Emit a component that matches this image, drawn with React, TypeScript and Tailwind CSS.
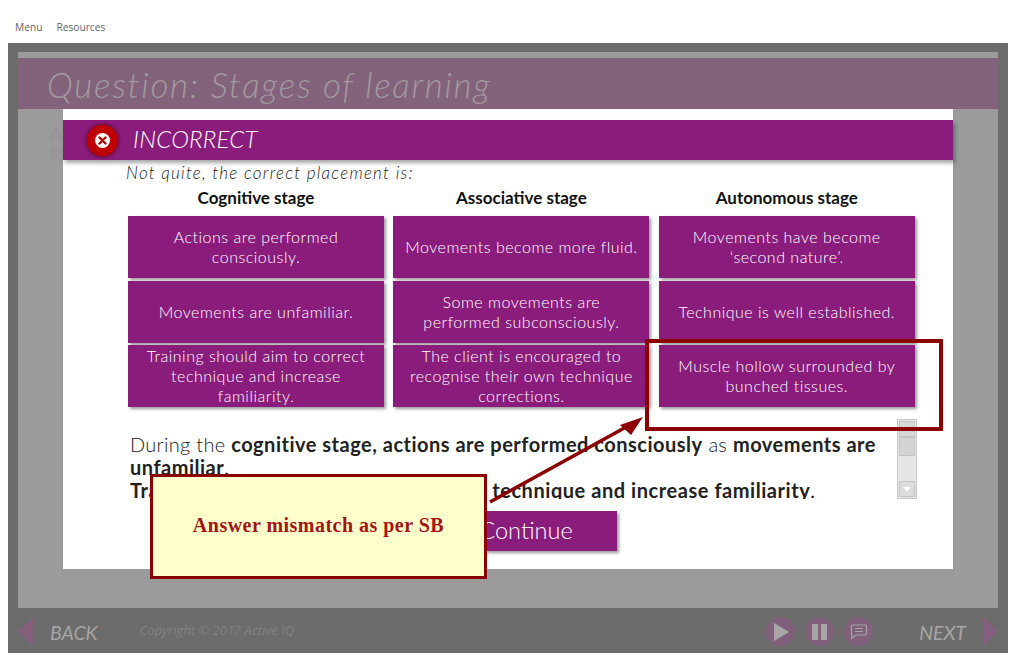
const font = "font-['Lato','Liberation_Sans',sans-serif]";

const stages = [
  {
    title: "Cognitive stage",
    cells: [
      "Actions are performed consciously.",
      "Movements are unfamiliar.",
      "Training should aim to correct technique and increase familiarity.",
    ],
  },
  {
    title: "Associative stage",
    cells: [
      "Movements become more fluid.",
      "Some movements are performed subconsciously.",
      "The client is encouraged to recognise their own technique corrections.",
    ],
  },
  {
    title: "Autonomous stage",
    cells: [
      "Movements have become ‘second nature’.",
      "Technique is well established.",
      "Muscle hollow surrounded by bunched tissues.",
    ],
  },
];

function RoundButton({ children }: { children: React.ReactNode }) {
  return (
    <div className="flex h-[29px] w-[29px] items-center justify-center rounded-full bg-[#81607b]">
      {children}
    </div>
  );
}

function Scrollbar() {
  return (
    <div className="flex h-[80px] w-[20px] shrink-0 flex-col justify-between border border-[#c8c8c8] bg-[#e6e6e6] p-px">
      <div className="flex flex-col">
        <div className="h-[16px] border border-[#c4c4c4] bg-[#d8d8d8]" />
        <div className="h-[19px] border border-[#c4c4c4] bg-[#d4d4d4]" />
      </div>
      <div className="flex h-[16px] items-center justify-center border border-[#c4c4c4] bg-[#dcdcdc]">
        <svg width="8" height="5" viewBox="0 0 8 5">
          <path d="M0 0h8L4 5z" fill="#fff" />
        </svg>
      </div>
    </div>
  );
}

function Modal() {
  return (
    <div className={`absolute left-[63px] top-[109px] flex h-[460px] w-[890px] flex-col bg-white pt-[11px] ${font}`}>
      <div className="flex h-[40px] items-center bg-[#8a1c7c] pl-[24px] shadow-[2px_3px_4px_rgba(0,0,0,0.35)]">
        <div className="flex h-[31px] w-[31px] items-center justify-center rounded-full bg-[#c00000] shadow-[0_0_4px_#500]">
          <div className="flex h-[15px] w-[15px] items-center justify-center rounded-full bg-white">
            <svg width="9" height="9" viewBox="0 0 9 9">
              <path d="M1.5 1.5l6 6M7.5 1.5l-6 6" stroke="#b00000" strokeWidth="2.4" strokeLinecap="round" />
            </svg>
          </div>
        </div>
        <span className="mb-[3px] ml-[15px] text-[24px] font-light italic tracking-[0.2px] text-white">INCORRECT</span>
      </div>
      <p className="ml-[63px] mt-px h-[24px] text-[17px] font-light italic leading-[24px] tracking-[1.25px] text-[#222]">
        Not quite, the correct placement is:
      </p>
      <div className="ml-[65px] grid grid-cols-[repeat(3,256px)] gap-x-[9.4px]">
        {stages.map((stage) => (
          <div key={stage.title} className="flex flex-col">
            <div className="flex h-[31px] items-center justify-center pb-[5px] text-[17px] font-bold text-[#111]">
              {stage.title}
            </div>
            <div className="flex flex-col gap-[2.5px]">
              {stage.cells.map((cell) => (
                <div
                  key={cell}
                  className="flex h-[62px] items-center justify-center bg-[#8a1c7c] px-[10px] text-center text-[16px] font-light leading-[20px] tracking-[0.5px] text-white shadow-[2px_2px_3px_rgba(0,0,0,0.4)]"
                >
                  <span>{cell}</span>
                </div>
              ))}
            </div>
          </div>
        ))}
      </div>
      <div className="ml-[67px] mt-[12px] flex h-[80px] w-[787px] items-start gap-[8px]">
        <div className="h-full w-[759px] overflow-hidden pt-[14px] text-[20px] leading-[23px] tracking-[0.3px] text-[#222]">
          <span className="font-light">During the </span>
          <b className="tracking-[0.5px]">cognitive stage, actions are performed consciously</b>
          <span className="font-light"> as </span>
          <b className="tracking-[0.5px]">movements are unfamiliar</b>.
          <br />
          <b className="tracking-[0.55px]">Training should aim at correcting their technique and increase familiarity</b>.
        </div>
        <Scrollbar />
      </div>
      <div className="ml-[372px] mt-[12px] flex h-[40px] w-[182px] items-center justify-center bg-[#8a1c7c] text-[23.5px] font-light text-white shadow-[2px_2px_3px_rgba(0,0,0,0.4)]">
        Continue
      </div>
    </div>
  );
}

function Annotation() {
  return (
    <>
      <div className="absolute left-[645px] top-[339px] h-[92px] w-[298px] border-[4px] border-[#8b0000]" />
      <svg className="absolute left-[480px] top-[405px]" width="170" height="105" viewBox="0 0 170 105">
        <path d="M10 97L148 21" stroke="#8b0000" strokeWidth="3.5" />
        <path d="M163 12L140 20L151 30z" fill="#8b0000" />
      </svg>
      <div className="absolute left-[150px] top-[474px] flex h-[105px] w-[337px] items-center justify-center border-[3px] border-[#8b0000] bg-[#ffffcc] pb-[4px] font-['Liberation_Serif',serif] text-[20px] font-bold tracking-[0.48px] text-[#a31515]">
        Answer mismatch as per SB
      </div>
    </>
  );
}

export default function App() {
  return (
    <div className={`relative h-[669px] w-[1021px] overflow-hidden bg-white ${font}`}>
      <nav className="flex h-[43px] items-start gap-[14px] pl-[15px] pt-[20px] font-['Open_Sans',sans-serif] text-[10.2px] leading-[14px] text-[#666]">
        <span>Menu</span>
        <span>Resources</span>
      </nav>
      <div className="ml-[8px] flex h-[610px] w-[1000px] flex-col bg-[#6c6c6c] px-[10px] pt-[9px]">
        <div className="flex h-[556px] flex-col bg-[#9b9b9b] pt-[6px]">
          <div className="flex h-[51px] items-center bg-[#82637b] pl-[29px] pt-px text-[35px] font-light italic tracking-[1.72px] text-[#a39aa1]">
            Question: Stages of learning
          </div>
          <div className="pl-[32px] pt-[15px] text-[18px] leading-[20px] text-[#959595]">
            <p>A</p>
            <p>R</p>
          </div>
        </div>
        <div className="flex h-[45px] items-center pt-[2px] text-[#a6a6a6]">
          <svg width="15" height="29" viewBox="0 0 15 29">
            <path d="M15 0V29L0 14.5z" fill="#86607f" />
          </svg>
          <span className="ml-[17px] mt-[2px] text-[19.5px] italic leading-none">BACK</span>
          <span className="mb-[2px] ml-[42px] font-['Open_Sans',sans-serif] text-[13px] italic text-[#828282]">
            Copyright © 2017 Active IQ
          </span>
          <div className="ml-auto flex items-center gap-[10px]">
            <RoundButton>
              <svg width="16" height="18" viewBox="0 0 16 18">
                <path d="M1 0L16 9L1 18z" fill="#a6a6a6" />
              </svg>
            </RoundButton>
            <RoundButton>
              <div className="flex gap-[3px]">
                <div className="h-[16px] w-[6px] bg-[#a6a6a6]" />
                <div className="h-[16px] w-[6px] bg-[#a6a6a6]" />
              </div>
            </RoundButton>
            <RoundButton>
              <svg width="18" height="16" viewBox="0 0 18 16" fill="none" stroke="#a6a6a6" strokeWidth="1.2">
                <path d="M3 1h12a1.5 1.5 0 0 1 1.5 1.5v7A1.5 1.5 0 0 1 15 11H6l-4 3.5V11a1.5 1.5 0 0 1-.5-1.5v-7A1.5 1.5 0 0 1 3 1z" />
                <path d="M5 4.5h8M5 7.5h8" />
              </svg>
            </RoundButton>
          </div>
          <span className="ml-[46px] mt-[2px] text-[19.5px] italic leading-none">NEXT</span>
          <svg className="ml-[17px]" width="15" height="29" viewBox="0 0 15 29">
            <path d="M0 0V29L15 14.5z" fill="#86607f" />
          </svg>
        </div>
      </div>
      <Modal />
      <Annotation />
    </div>
  );
}
